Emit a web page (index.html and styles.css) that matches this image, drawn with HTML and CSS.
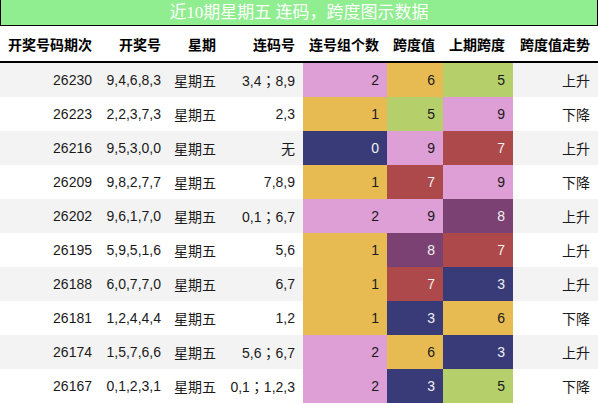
FILE: index.html
```html
<!DOCTYPE html>
<html lang="zh">
<head>
  <meta charset="UTF-8">
  <title>连码跨度图示</title>
  <link rel="stylesheet" href="styles.css">
</head>
<body>
  <div class="title">近10期星期五 连码，跨度图示数据</div>
  <table class="data-table">
    <colgroup>
      <col class="w-issue">
      <col class="w-nums">
      <col class="w-day">
      <col class="w-lian">
      <col class="w-count">
      <col class="w-span">
      <col class="w-prev">
      <col class="w-trend">
    </colgroup>
    <thead>
      <tr>
        <th>开奖号码期次</th>
        <th>开奖号</th>
        <th>星期</th>
        <th>连码号</th>
        <th>连号组个数</th>
        <th>跨度值</th>
        <th>上期跨度</th>
        <th>跨度值走势</th>
      </tr>
    </thead>
    <tbody>
      <tr>
        <td>26230</td><td>9,4,6,8,3</td><td>星期五</td><td>3,4；8,9</td>
        <td class="c2">2</td><td class="c6">6</td><td class="c5">5</td><td>上升</td>
      </tr>
      <tr>
        <td>26223</td><td>2,2,3,7,3</td><td>星期五</td><td>2,3</td>
        <td class="c1">1</td><td class="c5">5</td><td class="c9">9</td><td>下降</td>
      </tr>
      <tr>
        <td>26216</td><td>9,5,3,0,0</td><td>星期五</td><td>无</td>
        <td class="c0">0</td><td class="c9">9</td><td class="c7">7</td><td>上升</td>
      </tr>
      <tr>
        <td>26209</td><td>9,8,2,7,7</td><td>星期五</td><td>7,8,9</td>
        <td class="c1">1</td><td class="c7">7</td><td class="c9">9</td><td>下降</td>
      </tr>
      <tr>
        <td>26202</td><td>9,6,1,7,0</td><td>星期五</td><td>0,1；6,7</td>
        <td class="c2">2</td><td class="c9">9</td><td class="c8">8</td><td>上升</td>
      </tr>
      <tr>
        <td>26195</td><td>5,9,5,1,6</td><td>星期五</td><td>5,6</td>
        <td class="c1">1</td><td class="c8">8</td><td class="c7">7</td><td>上升</td>
      </tr>
      <tr>
        <td>26188</td><td>6,0,7,7,0</td><td>星期五</td><td>6,7</td>
        <td class="c1">1</td><td class="c7">7</td><td class="c3">3</td><td>上升</td>
      </tr>
      <tr>
        <td>26181</td><td>1,2,4,4,4</td><td>星期五</td><td>1,2</td>
        <td class="c1">1</td><td class="c3">3</td><td class="c6">6</td><td>下降</td>
      </tr>
      <tr>
        <td>26174</td><td>1,5,7,6,6</td><td>星期五</td><td>5,6；6,7</td>
        <td class="c2">2</td><td class="c6">6</td><td class="c3">3</td><td>上升</td>
      </tr>
      <tr>
        <td>26167</td><td>0,1,2,3,1</td><td>星期五</td><td>0,1；1,2,3</td>
        <td class="c2">2</td><td class="c3">3</td><td class="c5">5</td><td>下降</td>
      </tr>
    </tbody>
  </table>
</body>
</html>
```

FILE: styles.css
```css
body {
  margin: 0;
  padding: 0;
  background: #ffffff;
  font-family: "Liberation Sans", Arial, "Noto Sans CJK TC", sans-serif;
  color: #111111;
}

.title {
  height: 25px;
  line-height: 25px;
  background: #90ee90;
  border: 1px solid #000000;
  border-top: none;
  color: #ffffff;
  font-family: "Liberation Serif", "Noto Sans CJK SC", serif;
  font-size: 17px;
  text-align: center;
}

.data-table {
  width: 598px;
  table-layout: fixed;
  border-collapse: separate;
  border-spacing: 0;
  font-size: 14px;
}

.w-issue { width: 100px; }
.w-nums { width: 69px; }
.w-day { width: 55px; }
.w-lian { width: 79px; }
.w-count { width: 84px; }
.w-span { width: 56px; }
.w-prev { width: 70px; }
.w-trend { width: 85px; }

.data-table th,
.data-table td {
  padding: 0 8px 0 0;
  text-align: right;
  white-space: nowrap;
  overflow: hidden;
}

.data-table th {
  height: 35px;
  font-weight: bold;
  color: #000000;
  border-bottom: 2px solid #000000;
}

.data-table td {
  height: 34px;
  color: #1a1a1a;
}

.data-table tbody tr:nth-child(odd) td {
  background: #f3f3f3;
}

.data-table tbody tr td.c0,
.data-table tbody tr td.c3 { background: #393b79; color: #f0f0f0; }
.data-table tbody tr td.c1,
.data-table tbody tr td.c6 { background: #e7ba52; }
.data-table tbody tr td.c2,
.data-table tbody tr td.c9 { background: #de9ed6; }
.data-table tbody tr td.c5 { background: #b5cf6b; }
.data-table tbody tr td.c7 { background: #ad494a; color: #f0f0f0; }
.data-table tbody tr td.c8 { background: #7b4173; color: #f0f0f0; }
```
